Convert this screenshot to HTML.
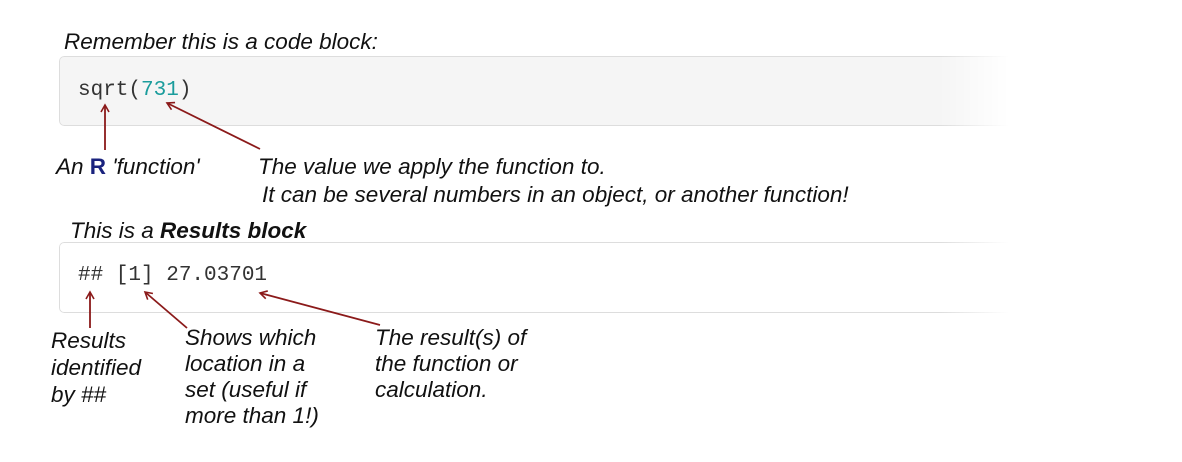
<!DOCTYPE html>
<html><head><style>
body{margin:0;width:1182px;height:462px;background:#fff;position:relative;overflow:hidden;font-family:"Liberation Sans",sans-serif}
.t{position:absolute;font-style:italic;font-size:22.5px;color:#111;white-space:nowrap;line-height:26px}
.code{position:absolute;font-family:"Liberation Mono",monospace;font-size:21px;color:#333;white-space:nowrap}
.blk{position:absolute;left:59px;width:960px;border:1px solid #ddd;border-radius:5px;border-right:none;
-webkit-mask-image:linear-gradient(to right,#000 880px,transparent 950px);mask-image:linear-gradient(to right,#000 880px,transparent 950px)}
</style></head><body>
<div class="t" style="left:64px;top:29px">Remember this is a code block:</div>
<div class="blk" style="top:56px;height:68px;background:#f5f5f5"></div>
<div class="code" style="left:78px;top:79px">sqrt(<span style="color:#1a9c9c">731</span>)</div>
<div class="t" style="left:56px;top:154px">An <b style="font-style:normal;color:#1a237e">R</b> 'function'</div>
<div class="t" style="left:258px;top:154px">The value we apply the function to.</div>
<div class="t" style="left:262px;top:182px">It can be several numbers in an object, or another function!</div>
<div class="t" style="left:70px;top:218px">This is a <b>Results block</b></div>
<div class="blk" style="top:242px;height:69px;background:#fff"></div>
<div class="code" style="left:78px;top:264px">## [1] 27.03701</div>
<div class="t" style="left:51px;top:327px;line-height:27px">Results<br>identified<br>by ##</div>
<div class="t" style="left:185px;top:325px">Shows which<br>location in a<br>set (useful if<br>more than 1!)</div>
<div class="t" style="left:375px;top:325px">The result(s) of<br>the function or<br>calculation.</div>
<svg width="1182" height="462" style="position:absolute;left:0;top:0">
<defs><marker id="a" markerWidth="10" markerHeight="10" refX="8" refY="5" orient="auto" markerUnits="userSpaceOnUse"><path d="M1 1 L8 5 L1 9" fill="none" stroke="#8b1a1a" stroke-width="1.6"/></marker></defs>
<g stroke="#8b1a1a" stroke-width="1.8" fill="none">
<line x1="105" y1="150" x2="105" y2="105" marker-end="url(#a)"/>
<line x1="260" y1="149" x2="167" y2="103" marker-end="url(#a)"/>
<line x1="90" y1="328" x2="90" y2="292" marker-end="url(#a)"/>
<line x1="187" y1="328" x2="145" y2="292" marker-end="url(#a)"/>
<line x1="380" y1="325" x2="260" y2="293" marker-end="url(#a)"/>
</g></svg>
</body></html>
